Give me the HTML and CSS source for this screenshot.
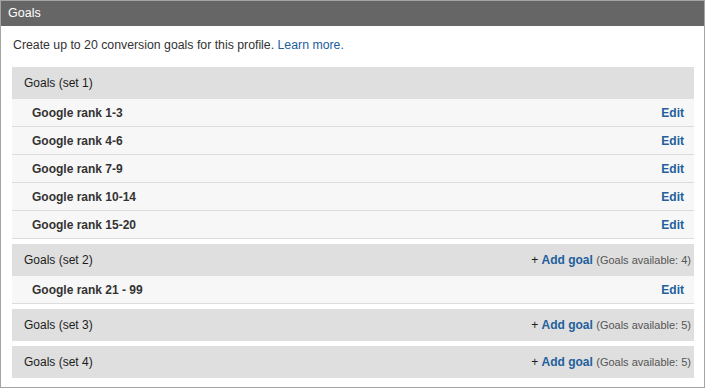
FILE: index.html
```html
<!DOCTYPE html>
<html lang="en">
<head>
<meta charset="UTF-8" />
<title>Goals</title>
<link rel="stylesheet" href="styles.css">
</head>
<body>
  <div class="panel">
    <div class="panel-title">Goals</div>
    <div class="panel-body">
      <p class="intro">Create up to 20 conversion goals for this profile. <a href="#">Learn more.</a></p>

      <!-- set 1 -->
      <div class="goal-set">
        <div class="set-head"><span>Goals (set 1)</span></div>
        <div class="goal-row"><span>Google rank 1-3</span><a href="#">Edit</a></div>
        <div class="goal-row"><span>Google rank 4-6</span><a href="#">Edit</a></div>
        <div class="goal-row"><span>Google rank 7-9</span><a href="#">Edit</a></div>
        <div class="goal-row"><span>Google rank 10-14</span><a href="#">Edit</a></div>
        <div class="goal-row"><span>Google rank 15-20</span><a href="#">Edit</a></div>
      </div>

      <!-- set 2 -->
      <div class="goal-set">
        <div class="set-head">
          <span>Goals (set 2)</span>
          <span class="add">+ <a href="#">Add goal</a> <small>(Goals available: 4)</small></span>
        </div>
        <div class="goal-row"><span>Google rank 21 - 99</span><a href="#">Edit</a></div>
      </div>

      <!-- set 3 -->
      <div class="goal-set">
        <div class="set-head">
          <span>Goals (set 3)</span>
          <span class="add">+ <a href="#">Add goal</a> <small>(Goals available: 5)</small></span>
        </div>
      </div>

      <!-- set 4 -->
      <div class="goal-set">
        <div class="set-head">
          <span>Goals (set 4)</span>
          <span class="add">+ <a href="#">Add goal</a> <small>(Goals available: 5)</small></span>
        </div>
      </div>
    </div>
  </div>
</body>
</html>
```

FILE: styles.css
```css
body {
  margin: 0;
  background: #fff;
  font-family: Arial, 'Liberation Sans', sans-serif;
  font-size: 12px;
  color: #333;
}
a {
  color: #22609c;
  text-decoration: none;
}
.panel {
  width: 703px;
  border: 1px solid #a4a4a4;
}
.panel-title {
  background: #666;
  color: #fff;
  height: 25px;
  line-height: 25px;
  padding-left: 7px;
  font-size: 12.5px;
}
.panel-body {
  padding: 0 10px 9px 11px;
}
.intro {
  margin: 0;
  padding: 11px 0 14px 1px;
  line-height: 16px;
  font-size: 12.3px;
}
.goal-set {
  margin-bottom: 5px;
}
.goal-set:last-child {
  margin-bottom: 0;
}
.set-head {
  display: flex;
  justify-content: space-between;
  align-items: center;
  height: 32px;
  padding: 0 3px 0 12px;
  background: #dfdfdf;
  color: #1c1c1c;
}
.set-head .add a {
  font-weight: bold;
}
.set-head small {
  font-size: 11px;
  color: #555;
}
.goal-row {
  display: flex;
  justify-content: space-between;
  align-items: center;
  height: 27px;
  padding: 0 10px 0 20px;
  background: #f7f7f7;
  border-bottom: 1px solid #dcdcdc;
  font-weight: bold;
}
```
